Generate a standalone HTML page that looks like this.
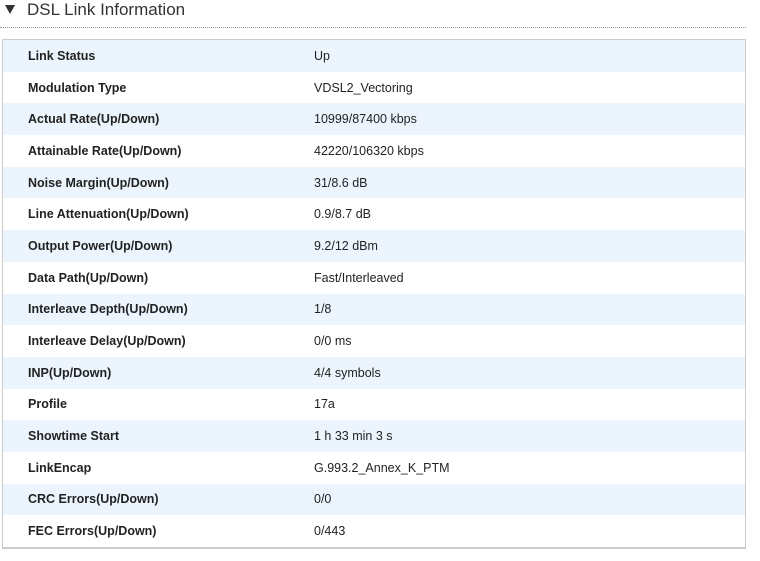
<!DOCTYPE html>
<html><head><style>
body{margin:0;background:#fff;font-family:"Liberation Sans",sans-serif;width:760px;height:561px;overflow:hidden;position:relative}
.t{position:absolute;left:27px;top:0;font-size:17px;color:#333;line-height:20px}
.tri{position:absolute;left:5px;top:5px;width:0;height:0;border-left:5px solid transparent;border-right:5px solid transparent;border-top:9px solid #333}
.dot{position:absolute;left:0;top:27px;width:746px;border-top:1px dotted #999}
.box{position:absolute;left:2px;top:39px;width:742px;height:507px;border:1px solid #ccc;border-bottom-width:2px}
.r{height:31.7px;display:flex;align-items:center;font-size:12.5px;color:#222}
.r:nth-child(odd){background:#ecf5fe}
.l{width:286px;padding-left:25px;font-weight:bold}
</style></head><body>
<div class="tri"></div><div class="t">DSL Link Information</div><div class="dot"></div>
<div class="box">
<div class="r"><div class="l">Link Status</div><div>Up</div></div>
<div class="r"><div class="l">Modulation Type</div><div>VDSL2_Vectoring</div></div>
<div class="r"><div class="l">Actual Rate(Up/Down)</div><div>10999/87400 kbps</div></div>
<div class="r"><div class="l">Attainable Rate(Up/Down)</div><div>42220/106320 kbps</div></div>
<div class="r"><div class="l">Noise Margin(Up/Down)</div><div>31/8.6 dB</div></div>
<div class="r"><div class="l">Line Attenuation(Up/Down)</div><div>0.9/8.7 dB</div></div>
<div class="r"><div class="l">Output Power(Up/Down)</div><div>9.2/12 dBm</div></div>
<div class="r"><div class="l">Data Path(Up/Down)</div><div>Fast/Interleaved</div></div>
<div class="r"><div class="l">Interleave Depth(Up/Down)</div><div>1/8</div></div>
<div class="r"><div class="l">Interleave Delay(Up/Down)</div><div>0/0 ms</div></div>
<div class="r"><div class="l">INP(Up/Down)</div><div>4/4 symbols</div></div>
<div class="r"><div class="l">Profile</div><div>17a</div></div>
<div class="r"><div class="l">Showtime Start</div><div>1 h 33 min 3 s</div></div>
<div class="r"><div class="l">LinkEncap</div><div>G.993.2_Annex_K_PTM</div></div>
<div class="r"><div class="l">CRC Errors(Up/Down)</div><div>0/0</div></div>
<div class="r"><div class="l">FEC Errors(Up/Down)</div><div>0/443</div></div>
</div>
</body></html>
